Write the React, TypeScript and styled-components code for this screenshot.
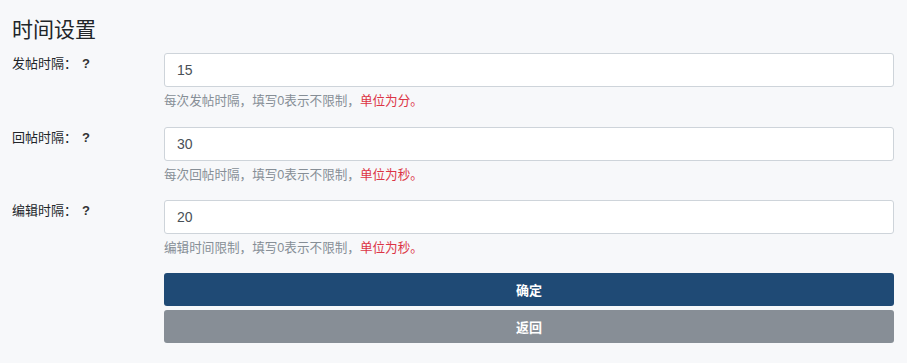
import React from "react";
import styled, { createGlobalStyle } from "styled-components";

const GlobalStyle = createGlobalStyle`
  html, body {
    margin: 0;
    padding: 0;
    background-color: #f7f8fa;
    font-family: "Liberation Sans", "Noto Sans CJK SC", sans-serif;
  }
`;

const fields = [
  { label: "发帖时隔：", value: "15", help: "每次发帖时隔，填写0表示不限制，", unit: "单位为分。" },
  { label: "回帖时隔：", value: "30", help: "每次回帖时隔，填写0表示不限制，", unit: "单位为秒。" },
  { label: "编辑时隔：", value: "20", help: "编辑时间限制，填写0表示不限制，", unit: "单位为秒。" },
];

const App = () => {
  return (
    <>
      <GlobalStyle />
      <Page>
        <Title>时间设置</Title>
        {fields.map((f) => (
          <FormRow key={f.label}>
            <Label>
              {f.label}
              <Hint>?</Hint>
            </Label>
            <Field>
              <Input defaultValue={f.value} />
              <HelpText>
                {f.help}
                <Red>{f.unit}</Red>
              </HelpText>
            </Field>
          </FormRow>
        ))}
        <Actions>
          <Button $variant="primary">确定</Button>
          <Button $variant="secondary">返回</Button>
        </Actions>
      </Page>
    </>
  );
};

const Page = styled.div`
  padding: 18px 13px 20px 12px;
  background-color: #f7f8fa;
  min-height: 363px;
  box-sizing: border-box;
`;

const Title = styled.h2`
  margin: 0 0 11px;
  font-size: 21px;
  font-weight: normal;
  line-height: 24px;
  color: #212529;
`;

const FormRow = styled.div`
  display: grid;
  grid-template-columns: 152px 1fr;
  margin-bottom: 15.5px;
`;

const Label = styled.label`
  font-size: 13px;
  line-height: 21px;
  color: #212529;
`;

const Hint = styled.b`
  margin-left: 5px;
  font-weight: bold;
  color: #333;
`;

const Field = styled.div`
  display: flex;
  flex-direction: column;
`;

const Input = styled.input`
  box-sizing: border-box;
  height: 34px;
  padding: 0 12px;
  border: 1px solid #ced4da;
  border-radius: 3px;
  background: #fff;
  font-family: inherit;
  font-size: 14px;
  color: #495057;
  outline: none;
`;

const HelpText = styled.small`
  margin-top: 4px;
  font-size: 12.6px;
  line-height: 20px;
  color: #868e96;
`;

const Red = styled.span`
  color: #dc3545;
`;

const Actions = styled.div`
  display: flex;
  flex-direction: column;
  gap: 4px;
  margin-left: 152px;
  margin-top: -1px;
`;

const Button = styled.button<{ $variant: "primary" | "secondary" }>`
  height: 33px;
  border: none;
  border-radius: 3px;
  background-color: ${(p) => (p.$variant === "primary" ? "#1f4a75" : "#878e96")};
  color: #fff;
  font-family: inherit;
  font-size: 13px;
  font-weight: bold;
  cursor: pointer;
`;

export default App;
